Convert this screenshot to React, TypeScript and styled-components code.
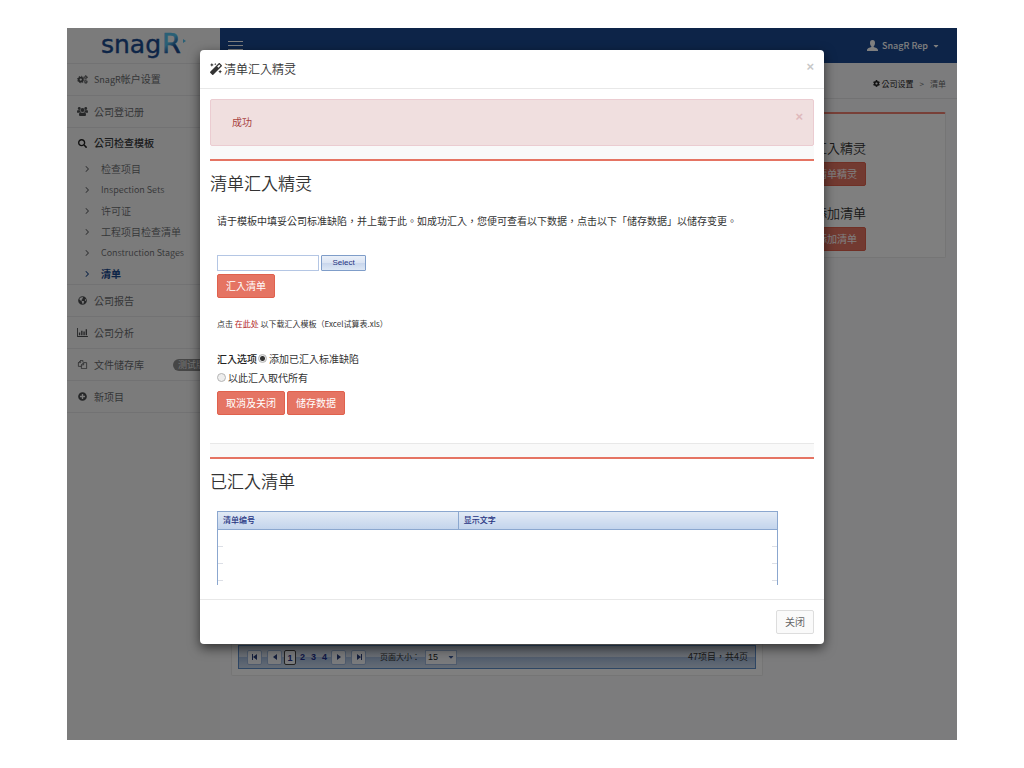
import React from "react";
import styled, { createGlobalStyle, css } from "styled-components";
import {
  FaSearch,
  FaGlobeAmericas,
  FaPlusCircle,
  FaCog,
  FaCaretDown,
  FaMagic,
} from "react-icons/fa";
import { FaAngleRight } from "react-icons/fa6";

const sans = `"Noto Sans CJK TC", "Noto Sans CJK SC", "Noto Sans", sans-serif`;

const GlobalStyle = createGlobalStyle`
  *, *::before, *::after { box-sizing: border-box; }
  body { margin: 0; background: #fff; color: #333; font: 10px/14px ${sans}; }
  button, input, select { font: inherit; }
  a { color: inherit; text-decoration: none; }
  h1, h2, h3, p, ul { margin: 0; padding: 0; font-weight: 350; }
  ul { list-style: none; }
`;

const Frame = styled.div`
  position: relative;
  display: grid;
  grid-template-columns: 153px 1fr;
  min-height: calc(100vh - 56px);
  margin: 28px 67px;
  overflow: hidden;
`;

const Sidebar = styled.nav`
  background: #f7f7f7;
  color: #6a6c6f;
`;

const LogoBar = styled.div`
  height: 35px;
  padding-left: 33px;
  svg { display: block; overflow: visible; }
`;

const MenuItem = styled.li`
  border-top: 1px solid #e4e5e7;
  &:last-child { border-bottom: 1px solid #e4e5e7; }
`;

const MenuLink = styled.a<{ $active?: boolean }>`
  display: flex;
  align-items: center;
  gap: 6px;
  height: ${(p) => (p.$active ? 30 : 31)}px;
  padding-left: 10px;
  white-space: nowrap;
  color: ${(p) => (p.$active ? "#34363a" : "#6a6c6f")};
  font-weight: ${(p) => (p.$active ? 500 : 400)};
  svg { width: 11px; height: 9px; color: ${(p) => (p.$active ? "#222" : "#4c4e50")}; }
`;

const Latin = styled.span`
  font-size: 9px;
`;

const Badge = styled.span`
  margin-left: 23px;
  padding: 0 5px;
  border-radius: 6px;
  background: #8c8c8c;
  color: #e8e8e8;
  font-size: 9px;
  line-height: 12px;
`;

const SubLink = styled.a<{ $current?: boolean }>`
  display: flex;
  align-items: center;
  gap: 10px;
  height: 21px;
  padding-left: 16px;
  white-space: nowrap;
  color: #6a6c6f;
  svg { width: 8px; height: 8px; }
  ${(p) => p.$current && css`color: #1b4a8f; font-weight: 700;`}
`;

const Main = styled.div`
  display: flex;
  flex-direction: column;
  background: #f9f9fa;
`;

const TopBar = styled.header`
  display: flex;
  justify-content: space-between;
  align-items: center;
  height: 35px;
  padding: 0 17px 0 8px;
  background: #1b4990;
  color: #fff;
`;

const PlainButton = styled.button`
  display: flex;
  align-items: center;
  gap: 4px;
  padding: 0;
  border: 0;
  background: none;
  color: inherit;
  font-weight: 500;
`;

const Crumbs = styled.div`
  display: flex;
  justify-content: flex-end;
  align-items: center;
  gap: 6px;
  height: 36px;
  padding-top: 6px;
  padding-right: 11px;
  border-bottom: 1px solid #e4e5e7;
  font-size: 8px;
  color: #6a6c6f;
  a { display: flex; align-items: center; gap: 2px; color: #222; }
`;

const Columns = styled.div`
  display: grid;
  grid-template-columns: 532px 1fr;
  gap: 11px;
  align-items: start;
  padding: 13px 11px;
`;

const Panel = styled.section<{ $tall?: boolean }>`
  border: 1px solid #eaeaea;
  border-top: 2px solid #f08070;
  border-radius: 2px;
  background: #fff;
  padding: ${(p) => (p.$tall ? "531px 6px 6px" : "25px 0 6px 13px")};
  h3 { margin-bottom: 5px; font-size: 13px; line-height: 18px; color: #333; }
  h3 ~ h3 { margin-top: 18px; }
`;

const Action = styled.button`
  height: 24px;
  padding: 0 8px;
  border: 1px solid #e0614d;
  border-radius: 2px;
  background: #e57463;
  color: #fff;
  line-height: 20px;
`;

const Pager = styled.div`
  display: flex;
  align-items: center;
  gap: 2px;
  height: 24px;
  padding: 0 7px 0 8px;
  border: 1px solid #5d8cc9;
  background: linear-gradient(#c4cfde, #d3dcea 48%, #a4bbdb 52%, #c9d7ea);
  color: #333;
  font-size: 8px;
`;

const PageButton = styled.button<{ $plain?: boolean }>`
  display: grid;
  place-items: center;
  width: ${(p) => (p.$plain ? 9 : 15)}px;
  height: 15px;
  padding: 0;
  border: ${(p) => (p.$plain ? "0" : "1px solid #9db5d9")};
  border-radius: 2px;
  background: ${(p) => (p.$plain ? "none" : "#f3f5f9")};
  color: #1e2f8c;
  font: 700 9px/14px "Liberation Sans", sans-serif;
  &[aria-current] { width: 12px; border-color: #444; }
  &:first-child { margin-right: 3px; }
  &:last-of-type { margin-left: 3px; }
`;

const PageSize = styled.label`
  display: flex;
  align-items: center;
  gap: 5px;
  margin-left: 12px;
  select {
    width: 32px;
    height: 15px;
    padding: 0 2px;
    border: 1px solid #9db5d9;
    appearance: none;
    background: #f3f5f9;
    font: 9px/13px "Liberation Sans", sans-serif;
    color: #222;
  }
  svg { margin-left: -15px; pointer-events: none; color: #3b5998; }
`;

const Total = styled.span`
  margin-left: auto;
  font-size: 9px;
`;

const Overlay = styled.div`
  position: absolute;
  inset: 0;
  padding: 22px 16px;
  background: rgba(0, 0, 0, 0.5);
`;

const Dialog = styled.div`
  width: 100%;
  max-width: 624px;
  margin: 0 auto;
  border-radius: 4px;
  background: #fff;
  box-shadow: 0 4px 12px rgba(0, 0, 0, 0.6);
`;

const DialogHeader = styled.header`
  display: flex;
  justify-content: space-between;
  height: 39px;
  padding: 9px 10px;
  border-bottom: 1px solid #e8e8e8;
  h1 { display: flex; align-items: center; gap: 2px; font-size: 12px; line-height: 20px; color: #333; }
`;

const Close = styled.button`
  align-self: flex-start;
  padding: 0;
  border: 0;
  background: none;
  color: #c8c8c8;
  font: 700 13px/16px "Liberation Sans", sans-serif;
`;

const DialogBody = styled.div`
  padding: 10px 10px 14px;
`;

const Alert = styled.div`
  display: flex;
  justify-content: space-between;
  height: 47px;
  padding: 9px 10px 0 21px;
  border: 1px solid #ebccd1;
  border-radius: 2px;
  background: #f0dfdf;
  color: #a94442;
  line-height: 26px;
  ${Close} { color: #dfb9bc; }
`;

const Strip = styled.div`
  height: 15px;
  border-bottom: 2px solid #e57463;
  background: #f9f9f9;
`;

const SectionTitle = styled.h2`
  padding-top: 9px;
  font-size: 17px;
  line-height: 26px;
  color: #333;
`;

const ImportForm = styled.form`
  display: flex;
  flex-direction: column;
  align-items: flex-start;
  padding: 18px 7px 28px;
  border-bottom: 1px solid #e8e8e8;
  p { font-weight: 400; }
`;

const FileRow = styled.div`
  display: flex;
  gap: 2px;
  margin: 27px 0 3px;
`;

const FileName = styled.input`
  width: 102px;
  height: 16px;
  border: 1px solid #b4c6e4;
  background: #fff;
`;

const SelectButton = styled.button`
  width: 45px;
  height: 16px;
  padding: 0;
  border: 1px solid #7f9dc9;
  border-radius: 1px;
  background: linear-gradient(#eaf0f9, #dbe4f3 50%, #c8d6ec 50%, #dde7f5);
  color: #25327f;
  font: 8px/12px "Liberation Sans", sans-serif;
`;

const Hint = styled.p`
  margin: 19px 0 18px;
  font-size: 8px;
  a { color: #b01e1e; }
`;

const Choice = styled.div`
  display: flex;
  align-items: center;
  height: 19px;
  gap: 1px;
  strong { font-weight: 500; color: #222; }
  label { display: flex; align-items: center; gap: 2px; }
  input {
    appearance: none;
    width: 9px;
    height: 9px;
    margin: 0;
    border: 1px solid #b5b5b5;
    border-radius: 50%;
    background: #eee;
  }
  input:checked { background: radial-gradient(circle, #333 0 2px, #e8e8e8 3px); }
`;

const Buttons = styled.div`
  display: flex;
  gap: 2px;
  margin-top: 4px;
`;

const GridScroll = styled.div`
  height: 74px;
  margin: 17px 36px 0 7px;
  overflow: hidden;
  border: solid #8ba7cf;
  border-width: 1px 1px 0;
`;

const Grid = styled.table`
  width: 100%;
  border-collapse: collapse;
  th {
    height: 17px;
    padding: 0 5px;
    border-bottom: 1px solid #8ba7cf;
    background: linear-gradient(#e2eaf5, #c3d4ec);
    color: #25327f;
    font-size: 8px;
    line-height: 16px;
    font-weight: 500;
    text-align: left;
  }
  th:first-child { width: 43%; }
  th + th { border-left: 1px solid #8ba7cf; }
  td { height: 17px; padding: 0; }
  td::before, td + td::after { content: ""; display: block; height: 17px; width: 5px; border-bottom: 1px solid #dcdfe6; }
  td + td::before { display: none; }
  td + td::after { margin-left: auto; }
`;

const DialogFooter = styled.footer`
  display: flex;
  justify-content: flex-end;
  padding: 10px;
  border-top: 1px solid #e8e8e8;
`;

const Dismiss = styled(Action)`
  border-color: #ddd;
  background: #fafafa;
  color: #666;
`;

function Logo() {
  return (
    <svg width="90" height="35" viewBox="0 0 90 35" role="img" aria-label="snagR">
      <defs>
        <linearGradient id="r" x1="0" y1="0" x2="0.6" y2="1">
          <stop offset="0.5" stopColor="#53c0ec" />
          <stop offset="0.75" stopColor="#1b4a8f" />
        </linearGradient>
      </defs>
      <text x="1" y="25" fontFamily="DejaVu Sans" fontSize="25" fill="#1b4a8f" stroke="#1b4a8f" strokeWidth="0.4">snag</text>
      <text x="62" y="25" fontFamily="DejaVu Sans" fontSize="27" fill="url(#r)" stroke="url(#r)" strokeWidth="0.6">R</text>
      <path d="M83 11l3 2-3 2Z" fill="#53c0ec" />
    </svg>
  );
}

function CogsIcon() {
  return (
    <svg viewBox="0 0 22 18" fill="none" stroke="currentColor" aria-hidden="true">
      <circle cx="7.500" cy="9" r="4" strokeWidth="3.500" />
      <circle cx="7.500" cy="9" r="6.500" strokeWidth="2" strokeDasharray="2.600 2.500" />
      <circle cx="17.500" cy="4.500" r="2" strokeWidth="2" />
      <circle cx="17.500" cy="4.500" r="3.500" strokeWidth="1.500" strokeDasharray="1.600 1.150" />
      <circle cx="17.500" cy="13.500" r="2" strokeWidth="2" />
      <circle cx="17.500" cy="13.500" r="3.500" strokeWidth="1.500" strokeDasharray="1.600 1.150" />
    </svg>
  );
}

function GroupIcon() {
  return (
    <svg viewBox="0 0 22 18" fill="currentColor" aria-hidden="true">
      <circle cx="4.500" cy="3" r="2.800" />
      <circle cx="17.500" cy="3" r="2.800" />
      <circle cx="11" cy="6" r="4" />
      <path d="M0 10.500C0 7.500.8 6 2 6c1.200.8 3 .9 4.300.3C6.200 8 6.700 9 7.500 10c-1.500 0-2.500.5-3.300 1.500H1.500C.5 11.500 0 11.200 0 10.500ZM22 10.500C22 7.500 21.200 6 20 6c-1.200.8-3 .9-4.300.3.1 1.700-.4 2.700-1.200 3.700 1.500 0 2.500.5 3.300 1.500h2.700c1 0 1.500-.3 1.500-1ZM4 15.500c0-3.200.9-5.200 3.200-5.200 2.300 1.500 5.300 1.500 7.600 0 2.300 0 3.200 2 3.200 5.200 0 1.600-1 2.500-2.500 2.500h-9C5 18 4 17.100 4 15.500Z" />
    </svg>
  );
}

function ChartIcon() {
  return (
    <svg viewBox="0 0 12 10" fill="currentColor" aria-hidden="true">
      <path d="M0 0h1v9h11v1H0ZM2 5h1.500v3H2ZM4.500 3H6v5H4.500ZM7 4h1.500v4H7ZM9.500 1.500H11V8H9.500Z" />
    </svg>
  );
}

function FilesIcon() {
  return (
    <svg viewBox="0 0 12 12" fill="none" stroke="currentColor" strokeWidth="1" aria-hidden="true">
      <path d="M4.500 8.500h-4v-5l3-3h3V3M3.500.5v3h-3M7.500 3.500h4v8h-7v-5ZM7.500 3.500v3h-3" />
    </svg>
  );
}

function UserIcon() {
  return (
    <svg width="11" height="11" viewBox="0 0 11 11" fill="currentColor" aria-hidden="true">
      <path d="M5.500 0C7.300 0 8 1.300 8 3c0 1.500-.6 2.600-1.300 3.200v.9c1.500.6 4.300 1.300 4.300 3.200V11H0v-.7c0-1.900 2.800-2.600 4.300-3.200v-.9C3.600 5.600 3 4.500 3 3 3 1.300 3.700 0 5.500 0Z" />
    </svg>
  );
}

function Arrow({ back, end }: { back?: boolean; end?: boolean }) {
  const tip = back ? "M6 1v6L2 4Z" : "M2 1v6l4-3Z";
  const bar = back ? "M1 1h1v6H1Z" : "M6 1h1v6H6Z";
  return (
    <svg width="8" height="8" viewBox="0 0 8 8" fill="#2b3f7a" aria-hidden="true">
      <path d={end ? tip + bar : tip} />
    </svg>
  );
}

const templates = [
  { name: "检查项目" },
  { name: "Inspection Sets", latin: true },
  { name: "许可证" },
  { name: "工程项目检查清单" },
  { name: "Construction Stages", latin: true },
  { name: "清单", current: true },
];

export default function App() {
  return (
    <>
      <GlobalStyle />
      <Frame lang="zh-Hant">
        <Sidebar>
          <LogoBar><Logo /></LogoBar>
          <ul>
            <MenuItem><MenuLink href="#"><CogsIcon /><span><Latin>SnagR</Latin>帐户设置</span></MenuLink></MenuItem>
            <MenuItem><MenuLink href="#"><GroupIcon />公司登记册</MenuLink></MenuItem>
            <MenuItem>
              <MenuLink href="#" $active><FaSearch />公司检查模板</MenuLink>
              <ul>
                {templates.map(({ name, latin, current }) => (
                  <li key={name}>
                    <SubLink href="#" $current={current}>
                      <FaAngleRight />
                      {latin ? <Latin>{name}</Latin> : name}
                    </SubLink>
                  </li>
                ))}
              </ul>
            </MenuItem>
            <MenuItem><MenuLink href="#"><FaGlobeAmericas />公司报告</MenuLink></MenuItem>
            <MenuItem><MenuLink href="#"><ChartIcon />公司分析</MenuLink></MenuItem>
            <MenuItem><MenuLink href="#"><FilesIcon />文件储存库<Badge>测试版</Badge></MenuLink></MenuItem>
            <MenuItem><MenuLink href="#"><FaPlusCircle />新项目</MenuLink></MenuItem>
          </ul>
        </Sidebar>
        <Main>
          <TopBar>
            <PlainButton aria-label="菜单">
              <svg width="15" height="10" viewBox="0 0 15 10" fill="#fff"><path d="M0 0h15v1H0ZM0 4h15v1H0ZM0 8h15v1H0Z" /></svg>
            </PlainButton>
            <PlainButton><UserIcon /><Latin>SnagR Rep</Latin><FaCaretDown size={8} /></PlainButton>
          </TopBar>
          <Crumbs><a href="#"><FaCog size={7} />公司设置</a><span>&gt;</span><span>清单</span></Crumbs>
          <Columns>
            <Panel $tall>
              <Pager>
                <PageButton aria-label="首页"><Arrow back end /></PageButton>
                <PageButton aria-label="上一页"><Arrow back /></PageButton>
                <PageButton aria-current="page">1</PageButton>
                <PageButton $plain>2</PageButton>
                <PageButton $plain>3</PageButton>
                <PageButton $plain>4</PageButton>
                <PageButton aria-label="下一页"><Arrow /></PageButton>
                <PageButton aria-label="末页"><Arrow end /></PageButton>
                <PageSize>页面大小：<select defaultValue="15"><option>15</option></select><FaCaretDown size={8} /></PageSize>
                <Total>47项目，共4页</Total>
              </Pager>
            </Panel>
            <Panel>
              <h3>清单汇入精灵</h3>
              <Action>汇入清单精灵</Action>
              <h3>手动添加清单</h3>
              <Action>手动添加清单</Action>
            </Panel>
          </Columns>
        </Main>
        <Overlay>
          <Dialog role="dialog" aria-labelledby="dialog-title">
            <DialogHeader>
              <h1 id="dialog-title"><FaMagic />清单汇入精灵</h1>
              <Close aria-label="关闭">×</Close>
            </DialogHeader>
            <DialogBody>
              <Alert role="alert">成功<Close aria-label="关闭">×</Close></Alert>
              <Strip />
              <SectionTitle>清单汇入精灵</SectionTitle>
              <ImportForm>
                <p>请于模板中填妥公司标准缺陷，并上载于此。如成功汇入，您便可查看以下数据，点击以下「储存数据」以储存变更。</p>
                <FileRow>
                  <FileName type="text" aria-label="文件" />
                  <SelectButton type="button">Select</SelectButton>
                </FileRow>
                <Action type="button">汇入清单</Action>
                <Hint>点击 <a href="#">在此处</a> 以下载汇入模板（Excel试算表.xls）</Hint>
                <Choice>
                  <strong>汇入选项</strong>
                  <label><input type="radio" name="mode" defaultChecked />添加已汇入标准缺陷</label>
                </Choice>
                <Choice>
                  <label><input type="radio" name="mode" />以此汇入取代所有</label>
                </Choice>
                <Buttons>
                  <Action type="button">取消及关闭</Action>
                  <Action type="button">储存数据</Action>
                </Buttons>
              </ImportForm>
              <Strip />
              <SectionTitle>已汇入清单</SectionTitle>
              <GridScroll>
                <Grid>
                  <thead><tr><th>清单编号</th><th>显示文字</th></tr></thead>
                  <tbody>
                    {[0, 1, 2].map((row) => <tr key={row}><td /><td /></tr>)}
                  </tbody>
                </Grid>
              </GridScroll>
            </DialogBody>
            <DialogFooter><Dismiss>关闭</Dismiss></DialogFooter>
          </Dialog>
        </Overlay>
      </Frame>
    </>
  );
}
